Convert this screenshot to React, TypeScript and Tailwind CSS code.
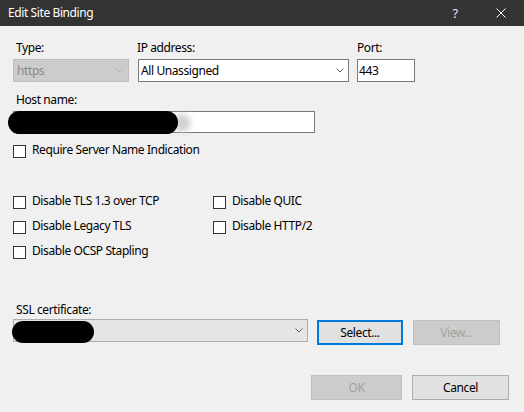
import React from "react";

function Chevron({ color }: { color: string }) {
  return (
    <svg width="8" height="5" viewBox="0 0 8 5" fill="none">
      <path d="M0.5 0.5 L4 4 L7.5 0.5" stroke={color} strokeWidth="1" />
    </svg>
  );
}

function Check({ label }: { label: string }) {
  return (
    <div className="flex items-start h-[13px]">
      <div className="w-[13px] h-[13px] shrink-0 border border-[#333333] bg-white" />
      <span className="ml-[6px] -mt-[3px] leading-[16px] whitespace-nowrap">{label}</span>
    </div>
  );
}

export default function App() {
  return (
    <div className="w-[524px] h-[412px] bg-[#f0f0f0] flex flex-col overflow-hidden text-[12px] leading-[16px] tracking-[-0.4px] text-black font-['Noto_Sans','Liberation_Sans',sans-serif]">
      {/* Title bar */}
      <div className="h-[26px] shrink-0 bg-[#333333] flex items-center text-white">
        <div className="flex-1 pl-[8px]">Edit Site Binding</div>
        <div className="w-[46px] h-full flex items-center justify-center text-[13px] text-[#e8e8e8]">?</div>
        <div className="w-[46px] h-full flex items-center justify-center">
          <svg width="10" height="10" viewBox="0 0 10 10" fill="none">
            <path d="M0.5 0.5 L9.5 9.5 M9.5 0.5 L0.5 9.5" stroke="#ffffff" strokeWidth="1" />
          </svg>
        </div>
      </div>

      {/* Body */}
      <div className="flex flex-col pl-[13px]">
        {/* Row 1 */}
        <div className="flex mt-[14px]">
          <div className="flex flex-col w-[116px]">
            <span className="pl-[3px]">Type:</span>
            <div className="mt-[3px] h-[23px] bg-[#cccccc] border border-[#bfbfbf] flex items-center pl-[3px] pr-[5px] text-[#8a8a8a]">
              <span className="flex-1">https</span>
              <Chevron color="#b5b5b5" />
            </div>
          </div>
          <div className="flex flex-col w-[211px] ml-[9px]">
            <span className="-ml-[1px]">IP address:</span>
            <div className="mt-[3px] h-[23px] bg-white border border-[#7a7a7a] flex items-center pl-[2px] pr-[4px]">
              <span className="flex-1">All Unassigned</span>
              <Chevron color="#606060" />
            </div>
          </div>
          <div className="flex flex-col w-[58px] ml-[8px]">
            <span>Port:</span>
            <div className="mt-[3px] h-[23px] bg-white border border-[#7a7a7a] flex items-center pl-[1px]">
              <span>443</span>
            </div>
          </div>
        </div>

        {/* Host name */}
        <span className="mt-[10px] pl-[3px]">Host name:</span>
        <div className="relative mt-[3px] w-[302px] h-[22px] bg-white border border-[#7a7a7a]">
          <div className="absolute left-[160px] top-[2px] w-[16px] h-[18px] rounded-full bg-[#cfcfcf] blur-[3px]" />
          <div className="absolute -left-[6px] -top-[1px] w-[170px] h-[23px] rounded-full bg-black" />
        </div>

        <div className="mt-[12px]">
          <Check label="Require Server Name Indication" />
        </div>

        {/* Checkbox grid */}
        <div className="flex mt-[38px]">
          <div className="flex flex-col gap-[12px] w-[200px]">
            <Check label="Disable TLS 1.3 over TCP" />
            <Check label="Disable Legacy TLS" />
            <Check label="Disable OCSP Stapling" />
          </div>
          <div className="flex flex-col gap-[12px]">
            <Check label="Disable QUIC" />
            <Check label="Disable HTTP/2" />
          </div>
        </div>

        {/* SSL certificate */}
        <span className="mt-[43px] pl-[3px]">SSL certificate:</span>
        <div className="flex items-start mt-[1px]">
          <div className="relative w-[295px] h-[23px] bg-[#e5e5e5] border border-[#adadad] flex items-center justify-end pr-[4px]">
            <div className="absolute -left-[2px] top-[1px] w-[82px] h-[22px] rounded-full bg-black" />
            <Chevron color="#606060" />
          </div>
          <button className="ml-[9px] mt-[1px] w-[86px] h-[25px] bg-[#e1e1e1] border-2 border-[#0078d7] flex items-center justify-center">
            Select...
          </button>
          <button className="ml-[10px] mt-[1px] w-[87px] h-[25px] bg-[#cccccc] border border-[#bfbfbf] text-[#a0a0a0] flex items-center justify-center">
            View...
          </button>
        </div>

        {/* OK / Cancel */}
        <div className="flex justify-end mt-[30px] pr-[15px]">
          <button className="w-[91px] h-[25px] bg-[#cccccc] border border-[#bfbfbf] text-[#a0a0a0] flex items-center justify-center">
            OK
          </button>
          <button className="ml-[10px] w-[97px] h-[25px] bg-[#e1e1e1] border border-[#adadad] flex items-center justify-center">
            Cancel
          </button>
        </div>
      </div>
    </div>
  );
}
